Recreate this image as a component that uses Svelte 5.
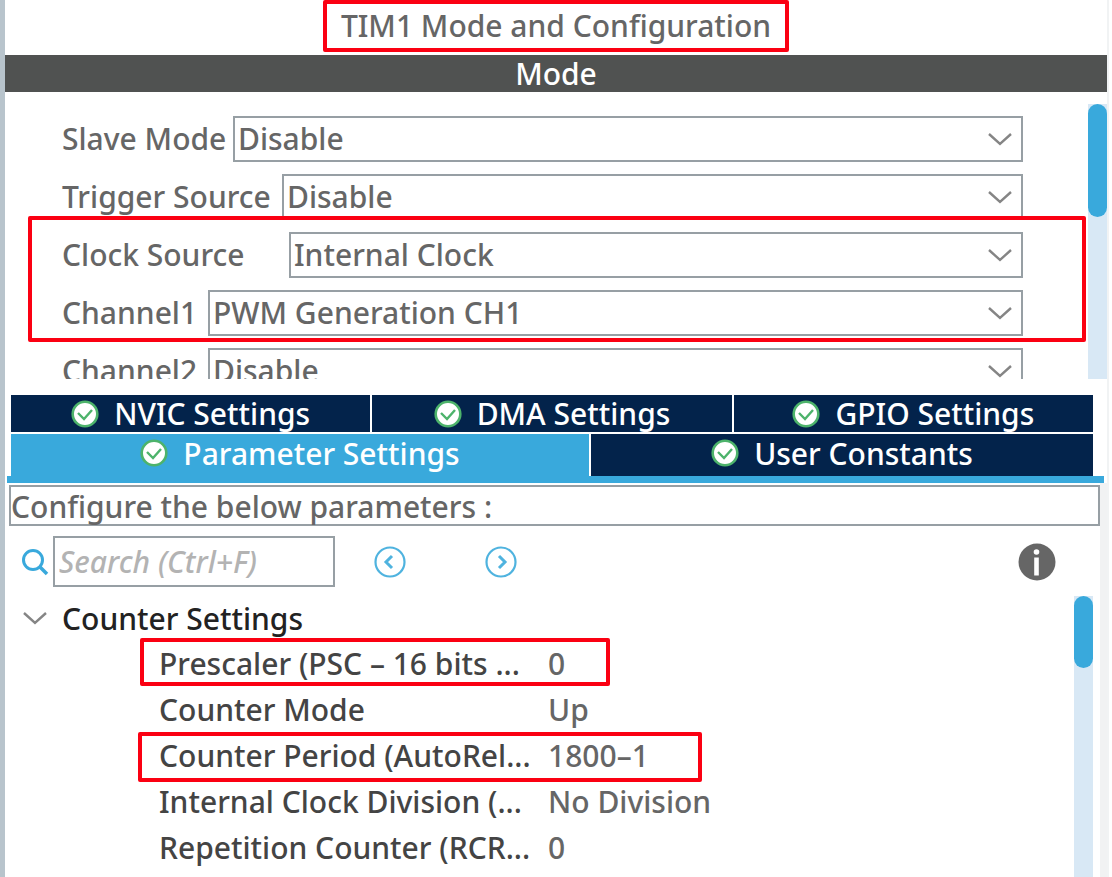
<script>
  let modes = $state([
    { id: 'slave', label: 'Slave Mode', labelWidth: 171, value: 'Disable' },
    { id: 'trigger', label: 'Trigger Source', labelWidth: 220, value: 'Disable' },
    { id: 'clock', label: 'Clock Source', labelWidth: 227, value: 'Internal Clock' },
    { id: 'channel1', label: 'Channel1', labelWidth: 146, value: 'PWM Generation CH1' },
    { id: 'channel2', label: 'Channel2', labelWidth: 146, value: 'Disable' }
  ])
  const options = ['Disable', 'Internal Clock', 'PWM Generation CH1']

  const topTabs = ['NVIC Settings', 'DMA Settings', 'GPIO Settings']
  const bottomTabs = ['Parameter Settings', 'User Constants']
  let active = $state('Parameter Settings')

  const params = [
    { name: 'Prescaler (PSC – 16 bits ...', value: '0', mark: 'short' },
    { name: 'Counter Mode', value: 'Up' },
    { name: 'Counter Period (AutoRel...', value: '1800–1', mark: 'long' },
    { name: 'Internal Clock Division (...', value: 'No Division' },
    { name: 'Repetition Counter (RCR...', value: '0' }
  ]
  let open = $state(true)
  let search = $state('')
</script>

{#snippet tab(name)}
  <button class="tab" class:active={active === name} onclick={() => active = name}>
    <svg width="28" height="28" viewBox="0 0 28 28" aria-hidden="true">
      <circle cx="14" cy="14" r="12.3" fill="#fff" stroke="#4db36b" stroke-width="2.6"/>
      <path d="M7 13l6 6 8-9" fill="none" stroke="#4db36b" stroke-width="2.4"/>
    </svg>
    <span>{name}</span>
  </button>
{/snippet}

{#snippet chevron()}
  <svg width="24" height="14" viewBox="0 0 24 14" aria-hidden="true">
    <path d="M1 1l11 10L23 1" fill="none" stroke="#858585" stroke-width="2.4"/>
  </svg>
{/snippet}

<main>
  <header>
    <h1>TIM1 Mode and Configuration</h1>
  </header>
  <h2>Mode</h2>

  <section class="mode">
    <div class="fields">
      {#each modes as mode}
        <div class="field">
          <label for={mode.id} style:width="{mode.labelWidth}px">{mode.label}</label>
          <div class="select">
            <select id={mode.id} bind:value={mode.value}>
              {#each options as option}
                <option>{option}</option>
              {/each}
            </select>
            {@render chevron()}
          </div>
        </div>
      {/each}
    </div>
    <div class="track"><div class="thumb tall"></div></div>
    <div class="mark group"></div>
  </section>

  <nav>
    <div class="tabs top">
      {#each topTabs as name}{@render tab(name)}{/each}
    </div>
    <div class="tabs bottom">
      {#each bottomTabs as name}{@render tab(name)}{/each}
    </div>
  </nav>

  <section class="config">
    <p class="hint">Configure the below parameters :</p>

    <div class="toolbar">
      <svg class="lens" width="28" height="28" viewBox="0 0 28 28" aria-hidden="true">
        <circle cx="11" cy="12" r="9.5" fill="none" stroke="#39a9dc" stroke-width="3"/>
        <path d="M18 19l7 7" stroke="#39a9dc" stroke-width="3.5"/>
      </svg>
      <input type="text" placeholder="Search (Ctrl+F)" aria-label="Search" bind:value={search}>
      <button class="icon" aria-label="Previous">
        <svg width="32" height="32" viewBox="0 0 32 32">
          <circle cx="16" cy="16" r="14.5" fill="none" stroke="#4fb3df" stroke-width="2.2"/>
          <path d="M18 10l-6 6 6 6" fill="none" stroke="#4fb3df" stroke-width="3"/>
        </svg>
      </button>
      <button class="icon next" aria-label="Next">
        <svg width="32" height="32" viewBox="0 0 32 32">
          <circle cx="16" cy="16" r="14.5" fill="none" stroke="#4fb3df" stroke-width="2.2"/>
          <path d="M14 10l6 6-6 6" fill="none" stroke="#4fb3df" stroke-width="3"/>
        </svg>
      </button>
      <button class="icon info" aria-label="Information">
        <svg width="38" height="38" viewBox="0 0 38 38">
          <circle cx="19" cy="19" r="18.5" fill="#666"/>
          <circle cx="18.5" cy="9" r="2.8" fill="#fff"/>
          <path d="M18.5 14.5v18" stroke="#fff" stroke-width="4.6"/>
        </svg>
      </button>
    </div>

    <div class="params">
      <div class="tree">
        <button class="node" aria-expanded={open} onclick={() => open = !open}>
          {@render chevron()}
          <span>Counter Settings</span>
        </button>
        {#if open}
          <table>
            <tbody>
              {#each params as { name, value, mark }}
                <tr>
                  <th scope="row">{name}{#if mark}<div class="mark {mark}"></div>{/if}</th>
                  <td>{value}</td>
                </tr>
              {/each}
            </tbody>
          </table>
        {/if}
      </div>
      <div class="track"><div class="thumb"></div></div>
    </div>
  </section>
</main>

<style>
  :global(body) {
    margin: 0;
    background: #fff;
  }

  main {
    box-sizing: border-box;
    display: flex;
    flex-direction: column;
    height: 100vh;
    overflow: hidden;
    margin-right: 3px;
    border-left: 5px solid #b8c4cc;
    border-right: 2px solid #f1f3f4;
    font-family: "Noto Sans", "Open Sans", sans-serif;
    font-size: 30px;
    font-weight: 500;
    line-height: 46px;
    color: #666;
  }

  button, input, select {
    font: inherit;
    color: inherit;
    border: 0;
    margin: 0;
    padding: 0;
    background: none;
    border-radius: 0;
  }

  button {
    cursor: pointer;
  }

  header {
    display: flex;
    justify-content: center;
    height: 55px;
    flex: none;
  }

  h1, h2 {
    margin: 0;
    font-size: 30px;
    font-weight: 500;
  }

  h1 {
    box-sizing: border-box;
    height: 52px;
    padding: 0 14px;
    border: 4px solid #fb0012;
    border-radius: 2px;
    line-height: 44px;
  }

  h2 {
    flex: none;
    height: 37px;
    line-height: 38px;
    text-align: center;
    color: #fff;
    background: #505251;
  }

  .mode {
    position: relative;
    display: flex;
    flex: none;
    height: 287px;
    overflow: hidden;
  }

  .fields {
    display: flex;
    flex-direction: column;
    gap: 12px;
    flex: 1;
    padding: 23px 65px 0 57px;
  }

  .field {
    display: flex;
    line-height: 48px;
    height: 46px;
  }

  label {
    flex: none;
    white-space: nowrap;
  }

  .select {
    position: relative;
    flex: 1;
  }

  select {
    appearance: none;
    box-sizing: border-box;
    width: 100%;
    height: 46px;
    padding: 0 40px 0 3px;
    border: 2px solid #979fa4;
    line-height: 42px;
  }

  .select svg {
    position: absolute;
    right: 11px;
    top: 18px;
    pointer-events: none;
  }

  .track {
    flex: none;
    width: 19px;
    background: #d8e8f5;
  }

  .mode .track {
    margin-top: 12px;
  }

  .thumb {
    height: 72px;
    border-radius: 10px;
    background: #39a9dc;
  }

  .thumb.tall {
    height: 113px;
  }

  .mark {
    position: absolute;
    box-sizing: border-box;
    border: 4px solid #fb0012;
    border-radius: 2px;
    pointer-events: none;
  }

  .mark.group {
    left: 23px;
    right: 21px;
    top: 124px;
    height: 126px;
  }

  nav {
    flex: none;
    margin: 16px 3px 0 2px;
    border-bottom: 7px solid #39a9dc;
  }

  .tabs {
    display: grid;
    gap: 2px;
    margin: 0 11px 0 4px;
  }

  .top {
    grid-template-columns: 1fr 1fr 1fr;
    margin-bottom: 2px;
  }

  .bottom {
    grid-template-columns: 578fr 502fr;
  }

  .tab {
    display: flex;
    align-items: center;
    justify-content: center;
    gap: 15px;
    height: 37px;
    line-height: 37px;
    color: #fff;
    background: #03234b;
  }

  .bottom .tab {
    height: 42px;
    padding-bottom: 4px;
  }

  .tab.active {
    background: #39a9dc;
  }

  .config {
    display: flex;
    flex-direction: column;
    flex: 1;
    min-height: 0;
    padding: 2px 0 0 4px;
    border-right: 7px solid #f1f2f3;
  }

  .hint {
    flex: none;
    box-sizing: border-box;
    height: 41px;
    margin: 0;
    border: 2px solid #979fa4;
    line-height: 40px;
  }

  .toolbar {
    display: flex;
    align-items: center;
    flex: none;
    height: 51px;
    margin: 10px 44px 0 13px;
  }

  .lens {
    margin-right: 3px;
  }

  input {
    box-sizing: border-box;
    width: 282px;
    height: 51px;
    padding: 0 4px;
    border: 2px solid #979fa4;
    margin-right: 39px;
  }

  input::placeholder {
    color: #b3b3b3;
    font-style: italic;
    opacity: 1;
  }

  .icon {
    display: flex;
  }

  .next {
    margin-left: 79px;
  }

  .info {
    margin-left: auto;
  }

  .params {
    display: flex;
    flex: 1;
    min-height: 0;
    margin-top: 9px;
    padding-right: 7px;
  }

  .tree {
    flex: 1;
    overflow: hidden;
    color: #444;
  }

  .node {
    display: flex;
    align-items: center;
    gap: 15px;
    height: 45px;
    padding-left: 14px;
    color: #222;
  }

  table {
    border-collapse: collapse;
  }

  th, td {
    height: 46px;
    padding: 0;
    font-weight: 500;
    text-align: left;
    white-space: nowrap;
  }

  th {
    position: relative;
    min-width: 389px;
    padding-left: 150px;
  }

  td {
    color: #666;
  }

  .mark.short {
    left: 131px;
    top: -3px;
    width: 470px;
    height: 48px;
  }

  .mark.long {
    left: 129px;
    top: -1px;
    width: 564px;
    height: 50px;
  }
</style>
